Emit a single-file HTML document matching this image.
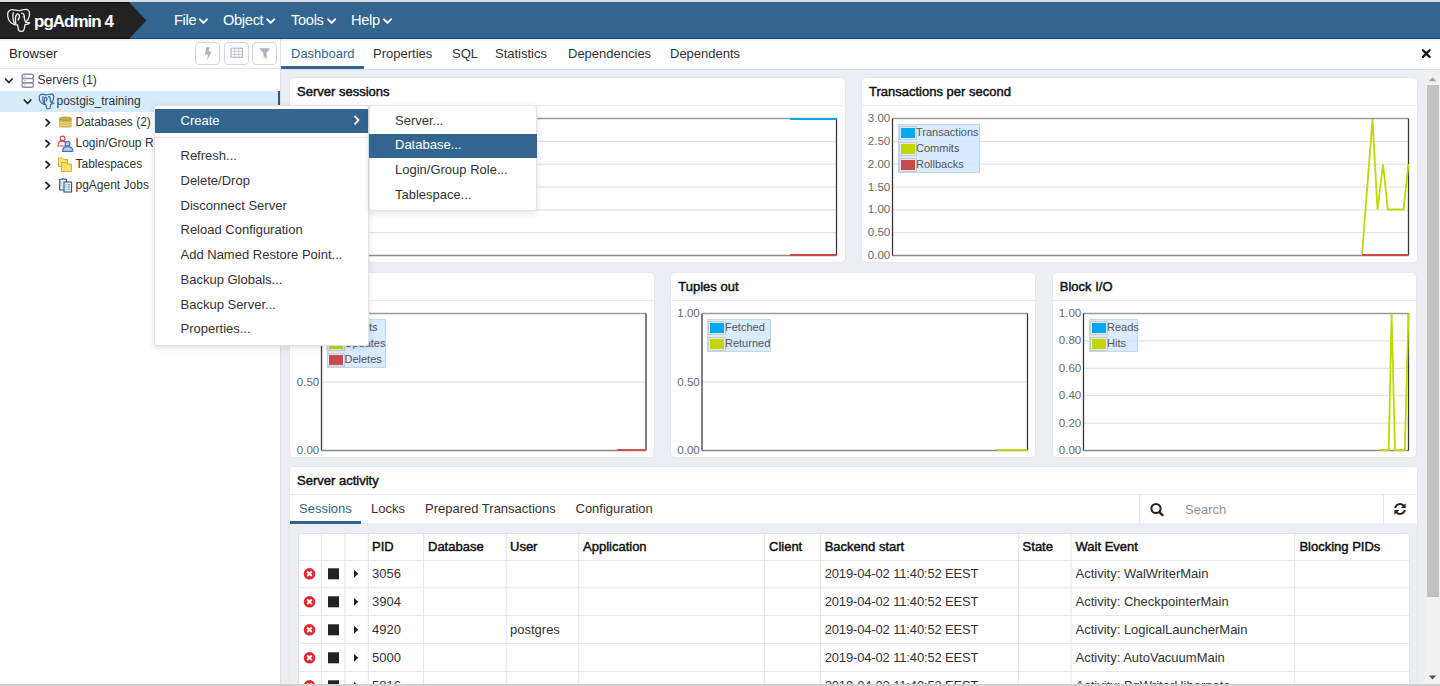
<!DOCTYPE html>
<html><head><meta charset="utf-8">
<style>
*{box-sizing:border-box;margin:0;padding:0}
html,body{width:1440px;height:686px;overflow:hidden;background:#fff;font-family:"Liberation Sans",sans-serif;color:#222;}
.abs{position:absolute}
#topstrip{left:0;top:0;width:1440px;height:2px;background:#dcdcdc}
#nav{left:0;top:2px;width:1440px;height:37px;background:#326690;border-bottom:1.2px solid #0f4a82}
#brand{left:0;top:2px;width:147px;height:37px}
.menu{position:absolute;top:2px;height:37px;line-height:37px;color:#fff;font-size:14.6px;letter-spacing:-0.3px}
.menu svg{position:absolute;top:15px}
#bottomstrip{left:0;top:684px;width:1440px;height:2px;background:#d0d0d0}
/* browser panel */
#browser{left:0;top:39px;width:281px;height:645px;background:#fff;border-right:1px solid #dde0e6}
#bhead{left:0;top:0;width:280px;height:30px;border-bottom:1px solid #e3e6eb}
#bhead .t{position:absolute;left:9px;top:6.5px;font-size:13.2px;color:#222}
.tbtn{position:absolute;top:3.3px;width:25px;height:22.8px;border:1.2px solid #d3d8df;border-radius:4px;background:#fff}
.row{position:absolute;left:0;width:280px;height:21px;font-size:12px;line-height:21px;color:#333}
.row.sel{background:#d6ecfa;border-right:2.2px solid #22598e}
.row .txt{position:absolute;top:0.3px}
.row .chev{position:absolute;top:6px}
/* dashboard tabs */
#tabs{left:281px;top:39px;width:1159px;height:31px;border-bottom:1px solid #dde0e6;background:#fff}
.tab{position:absolute;top:7px;font-size:13px;color:#333}
#dash{left:281px;top:70px;width:1144px;height:614px;background:#ebeef3;overflow:hidden}
#scroll{left:1425px;top:70px;width:15px;height:614px;background:#f1f1f1}
.panel{position:absolute;background:#fff;border:1px solid #e4e7ec;border-radius:5px;overflow:hidden}
.ptitle{position:absolute;left:7px;top:6px;font-size:13px;font-weight:normal;color:#111;-webkit-text-stroke:0.45px #111;white-space:nowrap}
.phead{position:absolute;left:0;top:0;right:0;height:28px;border-bottom:1px solid #e8eaee}
.ylab{position:absolute;font-size:11.6px;color:#6a6a6a;text-align:right;width:30px;line-height:14px}
.legend{position:absolute;background:rgba(210,232,255,.85);border:1px solid #c5d6e8;font-size:11px;color:#545454}
.legend .it{position:absolute;left:0;height:16px;line-height:16px}
.legend .sw{position:absolute;left:1.8px;top:3px;width:14px;height:10px;outline:1px solid #ccc;outline-offset:1px}
.legend .lt{position:absolute;left:17px;top:-1px;white-space:nowrap}
/* context menu */
.cm{position:absolute;background:#fff;border:1px solid #e0e3e8;border-radius:3px;box-shadow:0 2px 6px rgba(0,0,0,.12);font-size:13px;color:#333}
.cm .mi{position:absolute;left:0;right:0;height:25px;line-height:25px;white-space:nowrap}
.cm .mi.hl{background:#326690;color:#fff}
/* table */
.tbl{position:absolute;background:#fff;border:1px solid #dde0e6}
.cell{position:absolute;font-size:13px;color:#333;white-space:nowrap}
.cell.th{font-weight:normal;font-size:13px;color:#111;-webkit-text-stroke:0.45px #111}
.cell.dt{letter-spacing:-0.15px}
</style></head>
<body>
<div id="topstrip" class="abs"></div>
<div id="nav" class="abs"></div>
<svg id="brand" class="abs" width="147" height="37" viewBox="0 0 147 37">
  <polygon points="0,0 129,0 146.5,18.5 129,37 0,37" fill="#222"/>
  <rect x="0" y="0" width="129" height="1.5" fill="#111"/><rect x="0" y="35.8" width="129.5" height="1.2" fill="#0c0c0c"/>
</svg>
<div id="bottomstrip" class="abs"></div>
<svg class="abs" style="left:0;top:0" width="40" height="40" viewBox="0 0 40 40">
 <g fill="none" stroke="#ececec" stroke-width="1.35" stroke-linejoin="round" stroke-linecap="round">
  <path d="M13.6,24.2 C10.5,23 8.2,20 7.7,16 C7.3,12.5 8.5,9.8 12,9.6 C14.5,9.5 16.5,10.6 18.2,10.6 C20.5,10.6 23,9.2 26.3,9.4 C29.2,9.8 29.9,12.5 29.4,15.5 C28.9,18.5 27.5,20.8 25.8,22.3 C27,22.4 28.8,22.3 29.7,22.8 C29.3,23.9 27.5,24.3 25,24.6 C24.6,26.8 24.5,29 23.6,30.5 C22.6,31.7 20.2,31.8 18.9,30.6 C18,29 17.8,26.5 17.5,24.8 C16.2,25.1 14.8,24.9 13.6,24.2 Z"/>
  <path d="M13.3,12.8 C12.5,15.8 12.8,19.8 14.6,23.4"/>
  <path d="M15.8,23.5 C15.3,20 15,16.5 16.6,14.5 C18,13.4 19.6,14.6 19.4,16.6 C19.3,18.2 18.6,19.3 18,19.9"/>
  <path d="M21.6,13.2 C23.4,13.4 24.5,15.5 24.4,18 C24.4,19.8 25,21.2 25.8,22.3"/>
  <circle cx="23" cy="16.8" r="0.6" fill="#ececec" stroke="none"/>
 </g>
</svg>
<div class="abs" style="left:34px;top:2.7px;height:37px;line-height:37px;color:#fff;font-size:17px;font-weight:bold;letter-spacing:-1px">pgAdmin 4</div>
<div class="menu" style="left:174px">File</div>
<div class="menu" style="left:223px">Object</div>
<div class="menu" style="left:291px">Tools</div>
<div class="menu" style="left:351px">Help</div>
<svg class="abs" style="left:0;top:0" width="400" height="40">
 <g fill="none" stroke="#fff" stroke-width="1.9" stroke-linecap="round" stroke-linejoin="round">
  <path d="M199.9,19.3 L203.4,22.9 L206.9,19.3"/><path d="M267.2,19.3 L270.7,22.9 L274.2,19.3"/><path d="M328.1,19.3 L331.6,22.9 L335.1,19.3"/><path d="M384.0,19.3 L387.5,22.9 L391.0,19.3"/>
 </g>
</svg>


<div id="browser" class="abs">
  <div id="bhead" class="abs"><span class="t">Browser</span>
    <div class="tbtn" style="left:195px"></div>
    <div class="tbtn" style="left:224px"></div>
    <div class="tbtn" style="left:252px"></div>
  </div>
  <svg class="abs" style="left:0;top:-39px" width="281" height="70">
   <path d="M206.2,47.3 L209.8,47.3 L208.6,51.4 L211.8,51.4 L207.1,59.9 L208,54.4 L205,54.4 Z" fill="#adb5c1"/>
   <rect x="231" y="48.2" width="11.4" height="9.1" fill="none" stroke="#adb5c1" stroke-width="1.1"/>
   <path d="M231,51.3 H242.4 M231,54.3 H242.4 M234.8,48.2 V57.3 M238.6,48.2 V57.3" stroke="#bcc3cd" stroke-width="0.9"/>
   <path d="M259.3,48.3 H270.1 L266.5,53.3 V59.2 L263.5,56.5 V53.3 Z" fill="#a9b2bf"/>
  </svg>
  <div class="row" style="top:30.8px"><span class="txt" style="left:37.5px">Servers (1)</span></div>
  <div class="row sel" style="top:51.8px"><span class="txt" style="left:56.5px">postgis_training</span></div>
  <div class="row" style="top:72.8px"><span class="txt" style="left:75.5px">Databases (2)</span></div>
  <div class="row" style="top:93.8px"><span class="txt" style="left:75.5px">Login/Group Roles</span></div>
  <div class="row" style="top:114.8px"><span class="txt" style="left:75.5px">Tablespaces</span></div>
  <div class="row" style="top:135.8px"><span class="txt" style="left:75.5px">pgAgent Jobs</span></div>
  <svg class="abs" style="left:0;top:-38.2px" width="100" height="200" viewBox="0 0 100 200">
   <g fill="none" stroke="#222" stroke-width="1.7" stroke-linecap="round" stroke-linejoin="round">
    <path d="M5.5,78 L8.8,81.5 L12.1,78"/>
    <path d="M24.3,99 L27.6,102.5 L30.9,99"/>
    <path d="M46,118.5 L49.5,121.7 L46,125"/>
    <path d="M46,139.5 L49.5,142.7 L46,146"/>
    <path d="M46,160.5 L49.5,163.7 L46,167"/>
    <path d="M46,181.5 L49.5,184.7 L46,188"/>
   </g>
   <!-- servers icon -->
   <g fill="#fff" stroke="#8c8cab" stroke-width="1.35">
    <rect x="22" y="73.2" width="11.5" height="4.2" rx="2"/>
    <rect x="22" y="77.6" width="11.5" height="4.2" rx="2"/>
    <rect x="22" y="82" width="11.5" height="4.2" rx="2"/>
   </g>
   <path d="M24.3,75.3 H25.6 M24.3,79.7 H25.6 M24.3,84.1 H25.6" stroke="#9a9ab5" stroke-width="1"/>
   <!-- elephant blue -->
   <g fill="none" stroke="#34689c" stroke-width="1.75" stroke-linejoin="round" stroke-linecap="round" transform="translate(34.1,86.8) scale(0.667)">
  <path d="M13.6,24.2 C10.5,23 8.2,20 7.7,16 C7.3,12.5 8.5,9.8 12,9.6 C14.5,9.5 16.5,10.6 18.2,10.6 C20.5,10.6 23,9.2 26.3,9.4 C29.2,9.8 29.9,12.5 29.4,15.5 C28.9,18.5 27.5,20.8 25.8,22.3 C27,22.4 28.8,22.3 29.7,22.8 C29.3,23.9 27.5,24.3 25,24.6 C24.6,26.8 24.5,29 23.6,30.5 C22.6,31.7 20.2,31.8 18.9,30.6 C18,29 17.8,26.5 17.5,24.8 C16.2,25.1 14.8,24.9 13.6,24.2 Z"/>
  <path d="M13.3,12.8 C12.5,15.8 12.8,19.8 14.6,23.4"/>
  <path d="M15.8,23.5 C15.3,20 15,16.5 16.6,14.5 C18,13.4 19.6,14.6 19.4,16.6 C19.3,18.2 18.6,19.3 18,19.9"/>
  <path d="M21.6,13.2 C23.4,13.4 24.5,15.5 24.4,18 C24.4,19.8 25,21.2 25.8,22.3"/>
   </g>
   <!-- databases gold -->
   <g>
    <path d="M59,118 V125.6 C59,127.6 71.8,127.6 71.8,125.6 V118 Z" fill="#cdb24a"/>
    <ellipse cx="65.4" cy="117.6" rx="6.4" ry="2.1" fill="#b89b2c"/>
    <ellipse cx="65.4" cy="117.4" rx="4.8" ry="1.2" fill="#c9ae45"/>
    <path d="M59,120.7 C59,122.4 71.8,122.4 71.8,120.7 M59,123.1 C59,124.8 71.8,124.8 71.8,123.1 M59,125.5 C59,127.2 71.8,127.2 71.8,125.5" fill="none" stroke="#f3ebc2" stroke-width="0.9"/>
   </g>
   <!-- login roles -->
   <g stroke-width="1.2">
    <path d="M58,145 C58,141.8 59.8,140.2 62.2,140.2 C64.6,140.2 66.4,141.8 66.4,145 Z" fill="#fff" stroke="#d24a4a"/>
    <circle cx="62.6" cy="137.4" r="2.3" fill="#fff" stroke="#d24a4a"/>
    <path d="M62.6,150.4 C62.6,147.2 64.5,145.6 67.6,145.6 C70.7,145.6 72.8,147.2 72.8,150.4 Z" fill="#b5cdef" stroke="#3f73c4"/>
    <circle cx="67.6" cy="142.8" r="2.4" fill="#b5cdef" stroke="#3f73c4"/>
   </g>
   <!-- tablespaces -->
   <g stroke="#d3b22a" stroke-width="1" fill="#f5e36c">
    <path d="M58.5,157 H62.5 L63.5,158.5 H67.5 V165.5 H58.5 Z"/>
    <path d="M61.5,161.5 H65.5 L66.5,163 H71.5 V170.5 H61.5 Z"/>
   </g>
   <!-- pgagent -->
   <g stroke="#34506f" stroke-width="1.1" fill="#e3eefa">
    <path d="M59.7,178.5 L63,177.8 L66.5,178.5 V189 H59.7 Z"/>
    <rect x="64" y="181" width="7.6" height="10" fill="#eef5fc"/>
    <path d="M65.5,183.7 H66.5 M65.5,186 H66.5 M65.5,188.3 H66.5 M67.6,183.7 H70.3 M67.6,186 H70.3 M67.6,188.3 H70.3" stroke="#3d93de" stroke-width="1.1"/>
    <path d="M61,181.5 V182.5 M61,184 V185" stroke="#3d93de" stroke-width="1"/>
   </g>
  </svg>

</div>

<div id="tabs" class="abs">
  <span class="tab" style="left:10px;color:#326690">Dashboard</span>
  <span class="tab" style="left:92px">Properties</span>
  <span class="tab" style="left:171px">SQL</span>
  <span class="tab" style="left:214px">Statistics</span>
  <span class="tab" style="left:287px">Dependencies</span>
  <span class="tab" style="left:389px">Dependents</span>
  <div class="abs" style="left:0;top:27px;width:83px;height:3px;background:#326690"></div>
</div>
<div id="dash" class="abs"></div>
<div id="scroll" class="abs"></div>
<div class="abs" style="left:0;top:39.2px;width:1440px;height:3px;background:linear-gradient(rgba(0,0,0,.07),rgba(0,0,0,0))"></div>
<!--DASH-->
<div class="panel" style="left:289px;top:77px;width:556.5px;height:186px"></div>
<div class="abs" style="left:289px;top:105px;width:556.5px;height:1px;background:#e9ebef"></div>
<div class="ptitle" style="left:297px;top:84px">Server sessions</div>
<svg class="abs" style="left:0;top:0;overflow:visible" width="1440" height="686"><line x1="320.5" x2="836.5" y1="141.33" y2="141.33" stroke="#dedede" stroke-width="1"/><line x1="320.5" x2="836.5" y1="164.17" y2="164.17" stroke="#dedede" stroke-width="1"/><line x1="320.5" x2="836.5" y1="187.00" y2="187.00" stroke="#dedede" stroke-width="1"/><line x1="320.5" x2="836.5" y1="209.83" y2="209.83" stroke="#dedede" stroke-width="1"/><line x1="320.5" x2="836.5" y1="232.67" y2="232.67" stroke="#dedede" stroke-width="1"/><line x1="320.5" x2="836.5" y1="118.5" y2="118.5" stroke="#9a9a9a" stroke-width="1.4"/><line x1="320.5" x2="836.5" y1="255.5" y2="255.5" stroke="#8a8a8a" stroke-width="1.4"/><line x1="320.5" x2="320.5" y1="118.5" y2="255.5" stroke="#3a3a3a" stroke-width="1.3"/><line x1="836.5" x2="836.5" y1="118.5" y2="255.5" stroke="#3a3a3a" stroke-width="1.3"/><polyline points="790,119 836.5,119" fill="none" stroke="#00A8F0" stroke-width="1.8" stroke-linejoin="miter"/><polyline points="790,255 836.5,255" fill="none" stroke="#CB4B4B" stroke-width="1.8" stroke-linejoin="miter"/></svg>
<div class="ylab" style="left:288.3px;top:111.0px">3</div>
<div class="ylab" style="left:288.3px;top:133.8px">2.5</div>
<div class="ylab" style="left:288.3px;top:156.7px">2</div>
<div class="ylab" style="left:288.3px;top:179.5px">1.5</div>
<div class="ylab" style="left:288.3px;top:202.3px">1</div>
<div class="ylab" style="left:288.3px;top:225.2px">0.5</div>
<div class="ylab" style="left:288.3px;top:248.0px">0</div>
<div class="legend" style="left:326px;top:124px;width:60px;height:50px"><div class="it" style="top:0.3px"><div class="sw" style="background:#00A8F0"></div><span class="lt">Total</span></div><div class="it" style="top:16.2px"><div class="sw" style="background:#C0D800"></div><span class="lt">Active</span></div><div class="it" style="top:32.1px"><div class="sw" style="background:#CB4B4B"></div><span class="lt">Idle</span></div></div>
<div class="panel" style="left:861px;top:77px;width:556.5px;height:186px"></div>
<div class="abs" style="left:861px;top:105px;width:556.5px;height:1px;background:#e9ebef"></div>
<div class="ptitle" style="left:869px;top:84px">Transactions per second</div>
<svg class="abs" style="left:0;top:0;overflow:visible" width="1440" height="686"><line x1="892.5" x2="1408.5" y1="141.33" y2="141.33" stroke="#dedede" stroke-width="1"/><line x1="892.5" x2="1408.5" y1="164.17" y2="164.17" stroke="#dedede" stroke-width="1"/><line x1="892.5" x2="1408.5" y1="187.00" y2="187.00" stroke="#dedede" stroke-width="1"/><line x1="892.5" x2="1408.5" y1="209.83" y2="209.83" stroke="#dedede" stroke-width="1"/><line x1="892.5" x2="1408.5" y1="232.67" y2="232.67" stroke="#dedede" stroke-width="1"/><line x1="892.5" x2="1408.5" y1="118.5" y2="118.5" stroke="#9a9a9a" stroke-width="1.4"/><line x1="892.5" x2="1408.5" y1="255.5" y2="255.5" stroke="#8a8a8a" stroke-width="1.4"/><line x1="892.5" x2="892.5" y1="118.5" y2="255.5" stroke="#3a3a3a" stroke-width="1.3"/><line x1="1408.5" x2="1408.5" y1="118.5" y2="255.5" stroke="#3a3a3a" stroke-width="1.3"/><polyline points="1362,255 1372.5,119 1377.5,209.5 1383,164 1387.8,209.5 1403.5,209.5 1408.5,164" fill="none" stroke="#C0D800" stroke-width="1.8" stroke-linejoin="miter"/><polyline points="1362,255 1408.5,255" fill="none" stroke="#CB4B4B" stroke-width="1.8" stroke-linejoin="miter"/></svg>
<div class="ylab" style="left:860.3px;top:111.0px">3.00</div>
<div class="ylab" style="left:860.3px;top:133.8px">2.50</div>
<div class="ylab" style="left:860.3px;top:156.7px">2.00</div>
<div class="ylab" style="left:860.3px;top:179.5px">1.50</div>
<div class="ylab" style="left:860.3px;top:202.3px">1.00</div>
<div class="ylab" style="left:860.3px;top:225.2px">0.50</div>
<div class="ylab" style="left:860.3px;top:248.0px">0.00</div>
<div class="legend" style="left:898px;top:124px;width:82px;height:49px"><div class="it" style="top:0.3px"><div class="sw" style="background:#00A8F0"></div><span class="lt">Transactions</span></div><div class="it" style="top:16.2px"><div class="sw" style="background:#C0D800"></div><span class="lt">Commits</span></div><div class="it" style="top:32.1px"><div class="sw" style="background:#CB4B4B"></div><span class="lt">Rollbacks</span></div></div>
<div class="panel" style="left:289px;top:272px;width:366px;height:186.3px"></div>
<div class="abs" style="left:289px;top:300px;width:366px;height:1px;background:#e9ebef"></div>
<div class="ptitle" style="left:297px;top:279px">Tuples in</div>
<svg class="abs" style="left:0;top:0;overflow:visible" width="1440" height="686"><line x1="321.5" x2="646" y1="382.00" y2="382.00" stroke="#dedede" stroke-width="1"/><line x1="321.5" x2="646" y1="313.5" y2="313.5" stroke="#9a9a9a" stroke-width="1.4"/><line x1="321.5" x2="646" y1="450.5" y2="450.5" stroke="#8a8a8a" stroke-width="1.4"/><line x1="321.5" x2="321.5" y1="313.5" y2="450.5" stroke="#3a3a3a" stroke-width="1.3"/><line x1="646" x2="646" y1="313.5" y2="450.5" stroke="#3a3a3a" stroke-width="1.3"/><polyline points="617,450 646,450" fill="none" stroke="#CB4B4B" stroke-width="1.8" stroke-linejoin="miter"/></svg>
<div class="ylab" style="left:289.3px;top:306.0px">1.00</div>
<div class="ylab" style="left:289.3px;top:374.5px">0.50</div>
<div class="ylab" style="left:289.3px;top:443.0px">0.00</div>
<div class="legend" style="left:326.5px;top:319px;width:59px;height:49px"><div class="it" style="top:0.3px"><div class="sw" style="background:#00A8F0"></div><span class="lt">Inserts</span></div><div class="it" style="top:16.2px"><div class="sw" style="background:#C0D800"></div><span class="lt">Updates</span></div><div class="it" style="top:32.1px"><div class="sw" style="background:#CB4B4B"></div><span class="lt">Deletes</span></div></div>
<div class="panel" style="left:670.3px;top:272px;width:365.70000000000005px;height:186.3px"></div>
<div class="abs" style="left:670.3px;top:300px;width:365.70000000000005px;height:1px;background:#e9ebef"></div>
<div class="ptitle" style="left:678.3px;top:279px">Tuples out</div>
<svg class="abs" style="left:0;top:0;overflow:visible" width="1440" height="686"><line x1="702" x2="1027.5" y1="382.00" y2="382.00" stroke="#dedede" stroke-width="1"/><line x1="702" x2="1027.5" y1="313.5" y2="313.5" stroke="#9a9a9a" stroke-width="1.4"/><line x1="702" x2="1027.5" y1="450.5" y2="450.5" stroke="#8a8a8a" stroke-width="1.4"/><line x1="702" x2="702" y1="313.5" y2="450.5" stroke="#3a3a3a" stroke-width="1.3"/><line x1="1027.5" x2="1027.5" y1="313.5" y2="450.5" stroke="#3a3a3a" stroke-width="1.3"/><polyline points="997,450 1027.5,450" fill="none" stroke="#C0D800" stroke-width="1.8" stroke-linejoin="miter"/></svg>
<div class="ylab" style="left:669.8px;top:306.0px">1.00</div>
<div class="ylab" style="left:669.8px;top:374.5px">0.50</div>
<div class="ylab" style="left:669.8px;top:443.0px">0.00</div>
<div class="legend" style="left:707px;top:319px;width:64px;height:33px"><div class="it" style="top:0.3px"><div class="sw" style="background:#00A8F0"></div><span class="lt">Fetched</span></div><div class="it" style="top:16.2px"><div class="sw" style="background:#C0D800"></div><span class="lt">Returned</span></div></div>
<div class="panel" style="left:1051.8px;top:272px;width:365.70000000000005px;height:186.3px"></div>
<div class="abs" style="left:1051.8px;top:300px;width:365.70000000000005px;height:1px;background:#e9ebef"></div>
<div class="ptitle" style="left:1059.8px;top:279px">Block I/O</div>
<svg class="abs" style="left:0;top:0;overflow:visible" width="1440" height="686"><line x1="1083.5" x2="1408.5" y1="340.90" y2="340.90" stroke="#dedede" stroke-width="1"/><line x1="1083.5" x2="1408.5" y1="368.30" y2="368.30" stroke="#dedede" stroke-width="1"/><line x1="1083.5" x2="1408.5" y1="395.70" y2="395.70" stroke="#dedede" stroke-width="1"/><line x1="1083.5" x2="1408.5" y1="423.10" y2="423.10" stroke="#dedede" stroke-width="1"/><line x1="1083.5" x2="1408.5" y1="313.5" y2="313.5" stroke="#9a9a9a" stroke-width="1.4"/><line x1="1083.5" x2="1408.5" y1="450.5" y2="450.5" stroke="#8a8a8a" stroke-width="1.4"/><line x1="1083.5" x2="1083.5" y1="313.5" y2="450.5" stroke="#3a3a3a" stroke-width="1.3"/><line x1="1408.5" x2="1408.5" y1="313.5" y2="450.5" stroke="#3a3a3a" stroke-width="1.3"/><polyline points="1380,450 1388.7,450 1391.6,313.5 1395,450 1404.8,450 1408.5,313.5" fill="none" stroke="#C0D800" stroke-width="1.8" stroke-linejoin="miter"/></svg>
<div class="ylab" style="left:1051.3px;top:306.0px">1.00</div>
<div class="ylab" style="left:1051.3px;top:333.4px">0.80</div>
<div class="ylab" style="left:1051.3px;top:360.8px">0.60</div>
<div class="ylab" style="left:1051.3px;top:388.2px">0.40</div>
<div class="ylab" style="left:1051.3px;top:415.6px">0.20</div>
<div class="ylab" style="left:1051.3px;top:443.0px">0.00</div>
<div class="legend" style="left:1089px;top:319px;width:49px;height:33px"><div class="it" style="top:0.3px"><div class="sw" style="background:#00A8F0"></div><span class="lt">Reads</span></div><div class="it" style="top:16.2px"><div class="sw" style="background:#C0D800"></div><span class="lt">Hits</span></div></div>
<div class="panel" style="left:289px;top:466.3px;width:1128.5px;height:260px;background:#ebeef3"></div>
<div class="abs" style="left:290px;top:467.3px;width:1126.5px;height:56.2px;background:#fff;border-radius:4px 4px 0 0"></div>
<div class="abs" style="left:290px;top:493.5px;width:1126px;height:1px;background:#e9ebef"></div>
<div class="ptitle" style="left:297px;top:473px">Server activity</div>
<div class="abs" style="left:299px;top:501px;font-size:13px;color:#326690;white-space:nowrap">Sessions</div>
<div class="abs" style="left:371px;top:501px;font-size:13px;color:#333;white-space:nowrap">Locks</div>
<div class="abs" style="left:425px;top:501px;font-size:13px;color:#333;white-space:nowrap">Prepared Transactions</div>
<div class="abs" style="left:575.5px;top:501px;font-size:13px;color:#333;white-space:nowrap">Configuration</div>
<div class="abs" style="left:290px;top:521px;width:71px;height:2.5px;background:#326690"></div>
<div class="abs" style="left:1139px;top:494px;width:1px;height:29.5px;background:#e3e6eb"></div>
<div class="abs" style="left:1382.5px;top:494px;width:1px;height:29.5px;background:#e3e6eb"></div>
<div class="abs" style="left:1185px;top:502px;font-size:13px;color:#8a93a0">Search</div>
<svg class="abs" style="left:1148px;top:500px" width="20" height="20"><circle cx="8" cy="8.5" r="4.6" fill="none" stroke="#222" stroke-width="2"/><path d="M11.3,12 L14.5,15.2" stroke="#222" stroke-width="2.4" stroke-linecap="round"/></svg>
<svg class="abs" style="left:1390px;top:499px" width="20" height="20"><g fill="none" stroke="#222" stroke-width="1.9"><path d="M5.2,9 A5,5 0 0 1 14.2,7.2"/><path d="M14.8,11 A5,5 0 0 1 5.8,12.8"/></g><path d="M15.6,4.2 V9 H10.8 Z" fill="#222"/><path d="M4.4,15.8 V11 H9.2 Z" fill="#222"/></svg>
<div class="abs" style="left:297.5px;top:532.5px;width:1112.0px;height:200px;background:#fff;border:1px solid #dde0e6;border-radius:3px 3px 0 0"></div>
<svg class="abs" style="left:0;top:0" width="1440" height="686"><line x1="321.5" x2="321.5" y1="532.5" y2="686" stroke="#e3e6eb" stroke-width="1"/><line x1="344.9" x2="344.9" y1="532.5" y2="686" stroke="#e3e6eb" stroke-width="1"/><line x1="368.3" x2="368.3" y1="532.5" y2="686" stroke="#e3e6eb" stroke-width="1"/><line x1="423.6" x2="423.6" y1="532.5" y2="686" stroke="#e3e6eb" stroke-width="1"/><line x1="506.3" x2="506.3" y1="532.5" y2="686" stroke="#e3e6eb" stroke-width="1"/><line x1="578.7" x2="578.7" y1="532.5" y2="686" stroke="#e3e6eb" stroke-width="1"/><line x1="764.7" x2="764.7" y1="532.5" y2="686" stroke="#e3e6eb" stroke-width="1"/><line x1="820.7" x2="820.7" y1="532.5" y2="686" stroke="#e3e6eb" stroke-width="1"/><line x1="1018.4" x2="1018.4" y1="532.5" y2="686" stroke="#e3e6eb" stroke-width="1"/><line x1="1071" x2="1071" y1="532.5" y2="686" stroke="#e3e6eb" stroke-width="1"/><line x1="1294.7" x2="1294.7" y1="532.5" y2="686" stroke="#e3e6eb" stroke-width="1"/><line x1="297.5" x2="1409.5" y1="560.5" y2="560.5" stroke="#e3e6eb" stroke-width="1"/><line x1="297.5" x2="1409.5" y1="587.8" y2="587.8" stroke="#e3e6eb" stroke-width="1"/><line x1="297.5" x2="1409.5" y1="615.5" y2="615.5" stroke="#e3e6eb" stroke-width="1"/><line x1="297.5" x2="1409.5" y1="643.5" y2="643.5" stroke="#e3e6eb" stroke-width="1"/><line x1="297.5" x2="1409.5" y1="671.5" y2="671.5" stroke="#e3e6eb" stroke-width="1"/></svg>
<div class="cell th" style="left:372px;top:539px">PID</div>
<div class="cell th" style="left:428px;top:539px">Database</div>
<div class="cell th" style="left:510px;top:539px">User</div>
<div class="cell th" style="left:583px;top:539px">Application</div>
<div class="cell th" style="left:769px;top:539px">Client</div>
<div class="cell th" style="left:824.7px;top:539px">Backend start</div>
<div class="cell th" style="left:1022.6px;top:539px">State</div>
<div class="cell th" style="left:1075.5px;top:539px">Wait Event</div>
<div class="cell th" style="left:1299.4px;top:539px">Blocking PIDs</div>
<div class="cell" style="left:372px;top:566px">3056</div>
<div class="cell dt" style="left:824.7px;top:566px">2019-04-02 11:40:52 EEST</div>
<div class="cell" style="left:1075.5px;top:566px">Activity: WalWriterMain</div>
<svg class="abs" style="left:300px;top:564px" width="64" height="20"><circle cx="9.5" cy="9.8" r="5.8" fill="#e3262b"/><path d="M7.2,7.5 L11.8,12.1 M11.8,7.5 L7.2,12.1" stroke="#fff" stroke-width="2"/><rect x="28" y="4.3" width="11" height="11" fill="#222"/><path d="M54,5.8 L58.3,9.8 L54,13.8 Z" fill="#222"/></svg>
<div class="cell" style="left:372px;top:593.5px">3904</div>
<div class="cell dt" style="left:824.7px;top:593.5px">2019-04-02 11:40:52 EEST</div>
<div class="cell" style="left:1075.5px;top:593.5px">Activity: CheckpointerMain</div>
<svg class="abs" style="left:300px;top:591.5px" width="64" height="20"><circle cx="9.5" cy="9.8" r="5.8" fill="#e3262b"/><path d="M7.2,7.5 L11.8,12.1 M11.8,7.5 L7.2,12.1" stroke="#fff" stroke-width="2"/><rect x="28" y="4.3" width="11" height="11" fill="#222"/><path d="M54,5.8 L58.3,9.8 L54,13.8 Z" fill="#222"/></svg>
<div class="cell" style="left:372px;top:621.5px">4920</div>
<div class="cell" style="left:510px;top:621.5px">postgres</div>
<div class="cell dt" style="left:824.7px;top:621.5px">2019-04-02 11:40:52 EEST</div>
<div class="cell" style="left:1075.5px;top:621.5px">Activity: LogicalLauncherMain</div>
<svg class="abs" style="left:300px;top:619.5px" width="64" height="20"><circle cx="9.5" cy="9.8" r="5.8" fill="#e3262b"/><path d="M7.2,7.5 L11.8,12.1 M11.8,7.5 L7.2,12.1" stroke="#fff" stroke-width="2"/><rect x="28" y="4.3" width="11" height="11" fill="#222"/><path d="M54,5.8 L58.3,9.8 L54,13.8 Z" fill="#222"/></svg>
<div class="cell" style="left:372px;top:649.5px">5000</div>
<div class="cell dt" style="left:824.7px;top:649.5px">2019-04-02 11:40:52 EEST</div>
<div class="cell" style="left:1075.5px;top:649.5px">Activity: AutoVacuumMain</div>
<svg class="abs" style="left:300px;top:647.5px" width="64" height="20"><circle cx="9.5" cy="9.8" r="5.8" fill="#e3262b"/><path d="M7.2,7.5 L11.8,12.1 M11.8,7.5 L7.2,12.1" stroke="#fff" stroke-width="2"/><rect x="28" y="4.3" width="11" height="11" fill="#222"/><path d="M54,5.8 L58.3,9.8 L54,13.8 Z" fill="#222"/></svg>
<div class="cell" style="left:372px;top:677.5px">5816</div>
<div class="cell dt" style="left:824.7px;top:677.5px">2019-04-02 11:40:52 EEST</div>
<div class="cell" style="left:1075.5px;top:677.5px">Activity: BgWriterHibernate</div>
<svg class="abs" style="left:300px;top:675.5px" width="64" height="20"><circle cx="9.5" cy="9.8" r="5.8" fill="#e3262b"/><path d="M7.2,7.5 L11.8,12.1 M11.8,7.5 L7.2,12.1" stroke="#fff" stroke-width="2"/><rect x="28" y="4.3" width="11" height="11" fill="#222"/><path d="M54,5.8 L58.3,9.8 L54,13.8 Z" fill="#222"/></svg>
<div id="bottomcover" class="abs" style="left:0;top:684px;width:1440px;height:2px;background:#d0d0d0"></div>
<!--/DASH-->
<!--MENU-->
<div class="abs" style="left:1425px;top:70px;width:15px;height:614px;background:#f1f1f1"></div>
<div class="abs" style="left:1427px;top:85px;width:12px;height:512px;background:#c1c1c1"></div>
<svg class="abs" style="left:1425px;top:70px" width="15" height="614"><path d="M3.8,11.2 L7.5,7.2 L11.2,11.2 Z" fill="#a3a3a3"/><path d="M3.8,605.5 L7.5,609.5 L11.2,605.5 Z" fill="#505050"/></svg>
<svg class="abs" style="left:1418px;top:45px" width="17" height="17"><path d="M4.9,5.2 L11.6,11.9 M11.6,5.2 L4.9,11.9" stroke="#111" stroke-width="2.3" stroke-linecap="round"/></svg>
<div class="cm" style="left:153.5px;top:105px;width:215px;height:241px"></div>
<div class="abs" style="left:155px;top:108.7px;width:212.5px;height:24.3px;background:#326690"></div>
<div class="abs" style="left:180.5px;top:113px;font-size:13px;color:#fff">Create</div>
<svg class="abs" style="left:350px;top:112px" width="14" height="16"><path d="M5,4.5 L8.6,8.2 L5,11.9" fill="none" stroke="#fff" stroke-width="1.8" stroke-linecap="round" stroke-linejoin="round"/></svg>
<div class="abs" style="left:155px;top:137px;width:212.5px;height:1px;background:#e4e6ea"></div>
<div class="abs" style="left:180.5px;top:148.0px;font-size:13px;color:#333;white-space:nowrap">Refresh...</div>
<div class="abs" style="left:180.5px;top:172.8px;font-size:13px;color:#333;white-space:nowrap">Delete/Drop</div>
<div class="abs" style="left:180.5px;top:197.5px;font-size:13px;color:#333;white-space:nowrap">Disconnect Server</div>
<div class="abs" style="left:180.5px;top:222.2px;font-size:13px;color:#333;white-space:nowrap">Reload Configuration</div>
<div class="abs" style="left:180.5px;top:247.0px;font-size:13px;color:#333;white-space:nowrap">Add Named Restore Point...</div>
<div class="abs" style="left:180.5px;top:271.8px;font-size:13px;color:#333;white-space:nowrap">Backup Globals...</div>
<div class="abs" style="left:180.5px;top:296.5px;font-size:13px;color:#333;white-space:nowrap">Backup Server...</div>
<div class="abs" style="left:180.5px;top:321.2px;font-size:13px;color:#333;white-space:nowrap">Properties...</div>
<div class="cm" style="left:368.5px;top:105px;width:168.5px;height:105.5px"></div>
<div class="abs" style="left:369px;top:133.6px;width:167.5px;height:24.2px;background:#326690"></div>
<div class="abs" style="left:395px;top:112.5px;font-size:13px;color:#333;white-space:nowrap">Server...</div>
<div class="abs" style="left:395px;top:137.3px;font-size:13px;color:#fff;white-space:nowrap">Database...</div>
<div class="abs" style="left:395px;top:162.1px;font-size:13px;color:#333;white-space:nowrap">Login/Group Role...</div>
<div class="abs" style="left:395px;top:186.9px;font-size:13px;color:#333;white-space:nowrap">Tablespace...</div>
<!--/MENU-->
</body></html>
